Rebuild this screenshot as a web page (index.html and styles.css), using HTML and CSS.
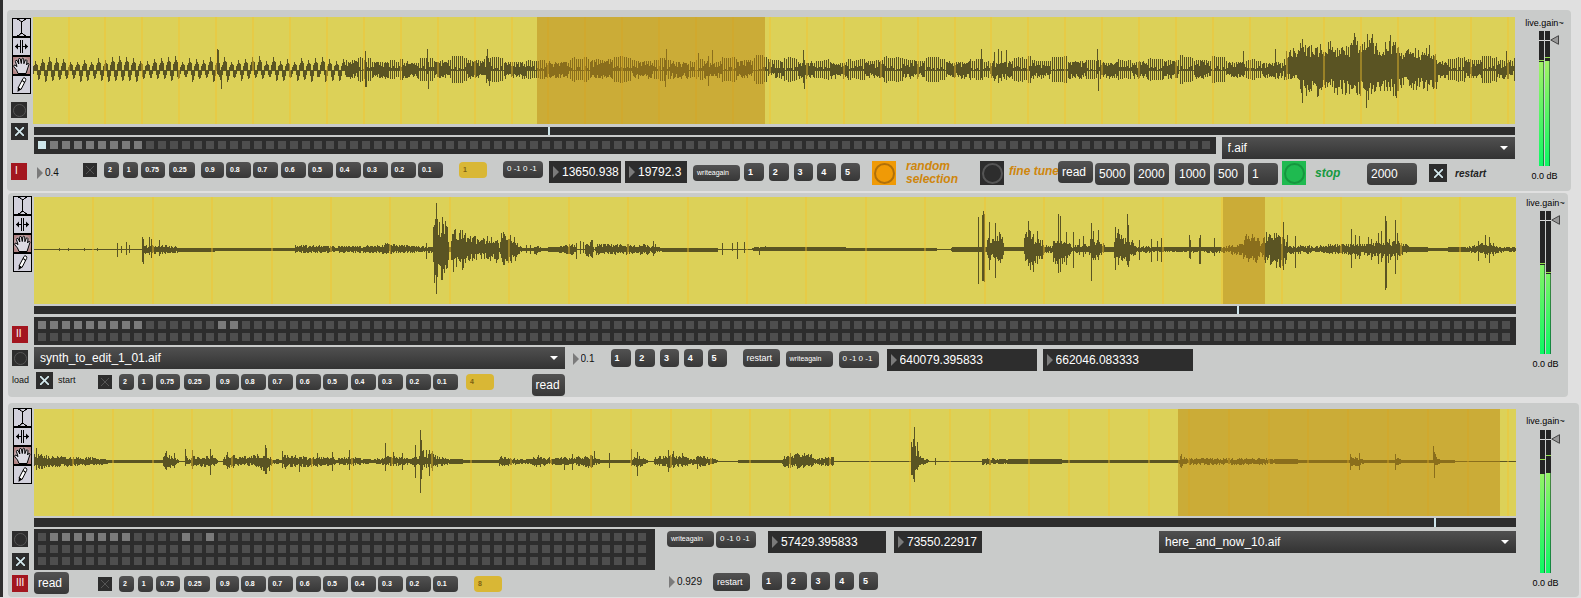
FILE: index.html
```html
<!DOCTYPE html>
<html lang="en">
<head>
<meta charset="utf-8">
<title>Sample player</title>
<link rel="stylesheet" href="styles.css">
</head>
<body>
<svg class="defs" aria-hidden="true">
  <symbol id="i-beam" viewBox="0 0 17 17"><path d="M4 .5h2.500M11 .5h2M6 1.500h1.500M10 1.500h1.500M7.500 2.500h2.500M8.500 3v11M7 14.500h3M6 15.500h1.500M10 15.500h1.500M4 16.500h2.500M11 16.500h2" stroke="#000" fill="none"/></symbol>
  <symbol id="i-split" viewBox="0 0 17 17"><path d="M7.500 2v13M9.500 2v13M2 8.500h5M10 8.500h5" stroke="#000" fill="none"/><path d="M2 8.500l3-3v6zM15 8.500l-3-3v6z"/></symbol>
  <symbol id="i-hand" viewBox="0 0 17 17"><path d="M5 16.500L3.500 13 .8 9.800Q.3 8 2 8l2 1.600L2.400 4.500Q2.500 3 4 3.300L5.800 7 5.400 2.200Q6 .6 7.300 1.800L8.300 6.500 8.800 1.800Q9.800.5 10.700 1.800L10.900 6.700 12.300 3Q13.500 2.300 14 3.700L13.600 8 14.700 6.300Q16 6 16 7.400L14.500 12 13 16.500z" fill="#dcdae2" stroke="#000"/></symbol>
  <symbol id="i-pencil" viewBox="0 0 17 17"><path d="M5 12L10 2.500Q10.800 1.300 12 2L12.700 3Q13 3.700 12.600 4.500L8 13.500z" fill="#fff" stroke="#000"/><path d="M5 11l3 2.500L4.500 16zM9.500 4l2.500 2-.6 1L9 5z"/></symbol>
  <symbol id="i-knob" viewBox="0 0 9 10"><path d="M.8 5L8.500 .7v8.600z" fill="#999" stroke="#444"/></symbol>
</svg>

<section class="panel panel-one" aria-label="Player one">
  <div class="side">
    <div class="tools">
      <button aria-label="Select"><svg><use href="#i-beam"/></svg></button>
      <button aria-label="Loop"><svg><use href="#i-split"/></svg></button>
      <button class="active" aria-label="Move"><svg><use href="#i-hand"/></svg></button>
      <button aria-label="Draw"><svg><use href="#i-pencil"/></svg></button>
    </div>
    <button class="bang" aria-label="Bang"></button>
    <input class="toggle large on" type="checkbox" checked aria-label="Play">
    <span class="mark">I</span>
  </div>
  <div class="main">
    <svg class="wave" data-wave="one" role="img" aria-label="Waveform of f.aif"></svg>
    <div class="scrub"><i style="left:34.7%"></i></div>
    <div class="row files">
      <div class="preset" data-count="98" data-on="0" data-stored="1,2,3,4,5,6,7,8"></div>
      <label class="menu"><select aria-label="File"><option>f.aif</option></select></label>
    </div>
    <div class="row controls">
      <label class="value"><i></i><input value="0.4" aria-label="Speed"></label>
      <div class="speeds">
        <input class="toggle dim" type="checkbox" aria-label="Speed lock">
        <div class="coarse"><button class="tiny">2</button><button class="tiny">1</button><button class="tiny w24">0.75</button><button class="tiny w26">0.25</button></div>
        <button class="tiny w23">0.9</button>
        <div class="fine"><button class="tiny">0.8</button><button class="tiny">0.7</button><button class="tiny">0.6</button><button class="tiny">0.5</button><button class="tiny">0.4</button><button class="tiny">0.3</button><button class="tiny">0.2</button><button class="tiny">0.1</button></div>
        <button class="tiny gold gap16">1</button>
      </div>
      <button class="msg loop gap16 up">0 -1 0 -1</button>
      <label class="number w72 gap6 up"><i></i><input value="13650.938" aria-label="Start"></label>
      <label class="number w62 gap4 up"><i></i><input value="19792.3" aria-label="End"></label>
      <button class="msg write gap6">writeagain</button>
      <div class="digits gap4"><button class="msg w20">1</button><button class="msg w20">2</button><button class="msg">3</button><button class="msg">4</button><button class="msg">5</button></div>
      <button class="bang big orange gap12" aria-label="Random selection"></button>
      <span class="note note-random">random selection</span>
      <button class="bang big" aria-label="Fine tune"></button>
      <span class="note note-tune up">fine tune</span>
      <button class="msg wide up">read</button>
      <button class="msg wide gap2 down">5000</button>
      <button class="msg wide gap4 down">2000</button>
      <button class="msg wide gap6 down">1000</button>
      <button class="msg wide w30 gap4 down">500</button>
      <button class="msg wide w30 gap4 down">1</button>
      <button class="bang big green gap4" aria-label="Stop"></button>
      <span class="note note-stop">stop</span>
      <button class="msg wide w50 down">2000</button>
      <input class="toggle large on gap12" id="restart" type="checkbox" checked>
      <label class="note note-restart" for="restart">restart</label>
    </div>
  </div>
  <div class="gain">
    <span>live.gain~</span>
    <div class="meter"><b style="--level:77%;--peak:78%"></b><b style="--level:78%;--peak:80%"></b><svg><use href="#i-knob"/></svg></div>
    <span>0.0 dB</span>
  </div>
</section>

<section class="panel panel-two" aria-label="Player two">
  <div class="side">
    <div class="tools">
      <button aria-label="Select"><svg><use href="#i-beam"/></svg></button>
      <button aria-label="Loop"><svg><use href="#i-split"/></svg></button>
      <button class="active" aria-label="Move"><svg><use href="#i-hand"/></svg></button>
      <button aria-label="Draw"><svg><use href="#i-pencil"/></svg></button>
    </div>
    <span class="mark">II</span>
    <button class="bang" aria-label="Bang"></button>
    <span class="caption">load</span>
  </div>
  <div class="main">
    <svg class="wave" data-wave="two" role="img" aria-label="Waveform of synth_to_edit_1_01.aif"></svg>
    <div class="scrub"><i style="left:81.2%"></i></div>
    <div class="preset" data-count="246" data-stored="0,1,2,3,4,5,6,7,8,15,16"></div>
    <div class="row cues">
      <label class="menu"><select aria-label="File"><option>synth_to_edit_1_01.aif</option></select></label>
      <label class="value gap8"><i></i><input value="0.1" aria-label="Speed"></label>
      <div class="digits"><button class="msg w20">1</button><button class="msg w20">2</button><button class="msg">3</button><button class="msg">4</button><button class="msg">5</button></div>
      <button class="msg restart gap16">restart</button>
      <button class="msg write gap6">writeagain</button>
      <button class="msg loop gap6">0 -1 0 -1</button>
      <label class="number w150 gap8 down"><i></i><input value="640079.395833" aria-label="Start"></label>
      <label class="number w150 gap6 down"><i></i><input value="662046.083333" aria-label="End"></label>
    </div>
    <div class="row rates">
      <input class="toggle large on gap2" id="start" type="checkbox" checked>
      <label class="caption" for="start">start</label>
      <div class="speeds">
        <input class="toggle dim" type="checkbox" aria-label="Speed lock">
        <div class="coarse"><button class="tiny">2</button><button class="tiny">1</button><button class="tiny w24">0.75</button><button class="tiny w26">0.25</button></div>
        <button class="tiny w23">0.9</button>
        <div class="fine"><button class="tiny">0.8</button><button class="tiny">0.7</button><button class="tiny">0.6</button><button class="tiny">0.5</button><button class="tiny">0.4</button><button class="tiny">0.3</button><button class="tiny">0.2</button><button class="tiny">0.1</button></div>
        <button class="tiny gold gap8">4</button>
      </div>
      <button class="msg wide last">read</button>
    </div>
  </div>
  <div class="gain">
    <span>live.gain~</span>
    <div class="meter"><b style="--level:62%;--peak:63%"></b><b style="--level:56%;--peak:57%"></b><svg><use href="#i-knob"/></svg></div>
    <span>0.0 dB</span>
  </div>
</section>

<section class="panel panel-three" aria-label="Player three">
  <div class="side">
    <div class="tools">
      <button aria-label="Select"><svg><use href="#i-beam"/></svg></button>
      <button aria-label="Loop"><svg><use href="#i-split"/></svg></button>
      <button class="active" aria-label="Move"><svg><use href="#i-hand"/></svg></button>
      <button aria-label="Draw"><svg><use href="#i-pencil"/></svg></button>
    </div>
    <button class="bang" aria-label="Bang"></button>
    <input class="toggle large on" type="checkbox" checked aria-label="Play">
    <span class="mark">III</span>
  </div>
  <div class="main">
    <svg class="wave" data-wave="three" role="img" aria-label="Waveform of here_and_now_10.aif"></svg>
    <div class="scrub"><i style="left:94.5%"></i></div>
    <div class="split">
      <div class="left">
        <div class="preset" data-count="153" data-stored="1,2,3,4,5,6,7,12,14"></div>
        <div class="row">
          <button class="msg wide">read</button>
          <div class="speeds">
            <input class="toggle dim" type="checkbox" aria-label="Speed lock">
            <div class="coarse"><button class="tiny">2</button><button class="tiny">1</button><button class="tiny w24">0.75</button><button class="tiny w26">0.25</button></div>
            <button class="tiny w23">0.9</button>
            <div class="fine"><button class="tiny">0.8</button><button class="tiny">0.7</button><button class="tiny">0.6</button><button class="tiny">0.5</button><button class="tiny">0.4</button><button class="tiny">0.3</button><button class="tiny">0.2</button><button class="tiny">0.1</button></div>
            <button class="tiny gold gap16">8</button>
          </div>
        </div>
      </div>
      <div class="right">
        <div class="row">
          <button class="msg write up">writeagain</button>
          <button class="msg loop gap2 up">0 -1 0 -1</button>
          <label class="number w118 gap12"><i></i><input value="57429.395833" aria-label="Start"></label>
          <label class="number w88 gap8"><i></i><input value="73550.22917" aria-label="End"></label>
          <label class="menu last"><select aria-label="File"><option>here_and_now_10.aif</option></select></label>
        </div>
        <div class="row">
          <label class="value"><i></i><input value="0.929" aria-label="Speed"></label>
          <button class="msg restart">restart</button>
          <div class="digits gap12"><button class="msg w20">1</button><button class="msg w20">2</button><button class="msg">3</button><button class="msg">4</button><button class="msg">5</button></div>
        </div>
      </div>
    </div>
  </div>
  <div class="gain">
    <span>live.gain~</span>
    <div class="meter"><b style="--level:69%;--peak:79%"></b><b style="--level:70%;--peak:82%"></b><svg><use href="#i-knob"/></svg></div>
    <span>0.0 dB</span>
  </div>
</section>
<script src="waves.js"></script>
</body>
</html>
```

FILE: styles.css
```css
* { box-sizing: border-box; }

body {
  margin: 0;
  padding: 10px 0 0;
  border-left: 3px solid #2f2f2f;
  background: #e0e0e0;
  color: #111;
  font: 12px/14px "Liberation Sans", Arial, sans-serif;
}

button, input, select { font: inherit; color: inherit; margin: 0; padding: 0; border: 0; }
.defs { position: absolute; width: 0; height: 0; }

/* panels */
.panel { display: flex; background: #c9cbca; border-radius: 4px; }
.panel-one { margin: 0 10px 2px 4px; padding: 7px 0 6px; }
.panel-two { margin: 0 13px 6px 5px; padding: 4px 0 1px; }
.panel-three { margin: 0 2px 0 5px; padding: 6px 0 3px; }
.main { flex: 1; min-width: 0; display: flex; flex-direction: column; gap: 2px; }
.panel-one .gain { width: 56px; }
.panel-two .gain { width: 52px; }
.panel-three .gain { width: 63px; }

/* left column */
.side { width: 26px; flex: none; padding-left: 4px; display: flex; flex-direction: column; }
.tools { margin-left: 1px; width: 19px; }
.tools button { display: block; width: 19px; height: 19px; border: 1px solid #000; background: #d2d1dc; }
.tools button.active { background: radial-gradient(circle, #d8d4dc 40%, #b08080 80%); }
.tools svg { display: block; width: 17px; height: 17px; }
.panel-one .side { padding-top: 1px; }
.panel-one .bang:not(.big) { margin-top: 8px; }
.panel-one .side .toggle { margin-top: 5px; }
.panel-one .mark { margin-top: 23px; }
.panel-two .tools, .panel-three .tools { margin-top: -1px; }
.panel-two .mark { margin-top: 54px; }
.panel-two .side .bang { margin-top: 7px; }
.panel-two .side .caption { margin: 7px 0 0; }
.panel-three .side .bang { margin-top: 47px; }
.panel-three .side .toggle { margin-top: 6px; }
.panel-three .mark { margin-top: 5px; }
.mark { width: 16px; height: 17px; padding-left: 4px; background: #a3161f; color: #fff; font-size: 10px; line-height: 16px; }
.caption { font-size: 9px; line-height: 14px; }

/* waveform */
.wave { display: block; width: 100%; height: 107px; background: #dcd158; }
.panel-one .wave { margin-bottom: 1px; }
.scrub { position: relative; height: 8px; background: #2d2d2d; }
.scrub i { position: absolute; top: 0; bottom: 0; width: 2px; background: #cde4ea; }
.panel-one .scrub, .panel-one .files { margin-left: 1px; }
.panel-two .scrub { margin-bottom: 1px; }
.panel-three .scrub { height: 9px; }

/* preset grids */
.preset { display: grid; grid-template-columns: repeat(auto-fill, 8px); gap: 4px; align-content: start; padding: 4px 4px 5px; background: #2d2d2d; overflow: hidden; }
.preset span { height: 8px; background: #4e4e4e; }
.preset .stored { background: #7a7a7a; }
.preset .on { background: #cfe6ea; }
.panel-two .preset { padding-bottom: 4px; }

/* rows */
.row { display: flex; align-items: center; }
.row > * { flex: none; }
.files { align-items: flex-start; gap: 6px; }
.files .preset { flex: 4 1 0; }
.files .menu { flex: 1 1 0; }
.controls { height: 24px; padding-left: 4px; }
.up { align-self: flex-start; }
.down { align-self: flex-end; }
.last { margin-left: auto; }
.gap2 { margin-left: 2px; }
.gap4 { margin-left: 4px; }
.gap6 { margin-left: 6px; }
.gap8 { margin-left: 8px; }
.gap12 { margin-left: 12px; }
.gap16 { margin-left: 16px; }
.cues { height: 24px; }
.cues .menu { width: 35.8%; align-self: flex-start; }
.cues .value { width: 38px; }
.rates { width: 35.8%; height: 24px; align-items: flex-start; margin-top: -1px; }
.rates .caption { width: 45px; padding: 0 0 0 5px; margin-top: 1px; }
.rates .speeds { margin-top: 2px; }
.rates .last { margin-top: 2px; }
.split { display: flex; }
.split .left { width: 41.9%; display: flex; flex-direction: column; gap: 2px; }
.split .left .speeds { margin: 2px 0 0 29px; }
.split .right { flex: 1; display: flex; flex-direction: column; justify-content: space-between; padding: 2px 0 2px 12px; }
.right .menu { width: 357px; }

/* message buttons */
.msg, .tiny {
  background: linear-gradient(#525252, #373737);
  color: #fff;
  text-align: left;
  white-space: nowrap;
  border-radius: 4px;
}
.msg { width: 19px; height: 18px; padding: 0 0 1px 4px; font-size: 9px; line-height: 12px; font-weight: bold; }
.tiny { width: 25px; height: 16px; padding: 0 0 1px 4px; font-size: 7px; line-height: 10px; font-weight: bold; }
.coarse .tiny { width: 15px; }
.tiny.w23 { width: 23px; }
.coarse .w24 { width: 24px; }
.coarse .w26 { width: 26px; }
.tiny.gold { width: 28px; background: #d9b735; color: #7d6212; }
.w20 { width: 20px; }
.loop { width: 40px; height: 17px; font-size: 8px; font-weight: normal; }
.write { width: 47px; height: 16px; font-size: 7px; font-weight: normal; }
.restart { width: 37px; font-weight: normal; }
.wide { width: 35px; height: 22px; font-size: 12px; line-height: 14px; font-weight: normal; }
.w30 { width: 30px; }
.w50 { width: 50px; }
.rates .wide { width: 33px; }

.speeds { display: flex; align-items: center; }
.controls .speeds { align-self: flex-start; margin-top: 1px; }
.speeds .toggle { margin-right: 7px; }
.coarse { display: flex; justify-content: space-between; width: 91px; margin-right: 6px; }
.fine { display: flex; justify-content: space-between; width: 217px; margin-left: 2px; }
.digits { display: flex; justify-content: space-between; width: 116px; }
.controls .digits, .right .digits, .cues .digits, .cues .restart { margin-bottom: 2px; }

/* toggles and bangs */
.toggle {
  --c: #555;
  appearance: none;
  width: 14px;
  height: 14px;
  background:
    linear-gradient(45deg, transparent 46%, var(--c) 46%, var(--c) 54%, transparent 54%) center / 8px 8px no-repeat,
    linear-gradient(-45deg, transparent 46%, var(--c) 46%, var(--c) 54%, transparent 54%) center / 8px 8px no-repeat,
    #2d2d2d;
}
.toggle.large {
  --c: #d3e9ee;
  width: 17px;
  height: 17px;
  background:
    linear-gradient(45deg, transparent 43%, var(--c) 45%, var(--c) 55%, transparent 57%) center / 9px 9px no-repeat,
    linear-gradient(-45deg, transparent 43%, var(--c) 45%, var(--c) 55%, transparent 57%) center / 9px 9px no-repeat,
    #2d2d2d;
}
.controls .toggle.large { width: 18px; height: 18px; }
.bang { display: grid; place-items: center; width: 16px; height: 16px; background: #2d2d2d; color: #555; }
.bang::before { content: ""; width: 11px; height: 11px; border: 1px solid currentColor; border-radius: 50%; }
.bang.big { width: 24px; height: 24px; }
.bang.big::before { width: 17px; height: 17px; border-width: 2px; }
.bang.orange { background: #f09a06; color: #b0700a; }
.bang.green { background: #1fba50; color: #16963f; }

/* number boxes */
.value, .number { display: flex; align-items: center; }
.value i, .number i { flex: none; border-left: 6px solid #7b7b7b; border-top: 6px solid transparent; border-bottom: 6px solid transparent; }
.value { width: 46px; font-size: 10px; }
.value input { width: 32px; margin-left: 2px; height: 14px; background: none; }
.number { height: 22px; padding-left: 4px; background: #2d2d2d; color: #fff; }
.number input { flex: 1; min-width: 0; margin-left: 3px; height: 16px; background: none; }
.right .value { padding-left: 2px; }
.w62 { width: 62px; }
.w72 { width: 72px; }
.w88 { width: 88px; }
.w118 { width: 118px; }
.w150 { width: 150px; }

/* file menus */
.menu { position: relative; height: 22px; }
.menu select { appearance: none; display: block; width: 100%; height: 22px; padding-left: 6px; background: linear-gradient(#505050, #333); color: #fff; border-radius: 0; }
.menu::after { content: ""; position: absolute; right: 7px; top: 9px; border-top: 4px solid #fff; border-left: 4px solid transparent; border-right: 4px solid transparent; }

/* comments */
.note { font-weight: bold; font-style: italic; line-height: 13px; color: #cf860c; }
.note-random { width: 84px; padding: 0 16px 0 10px; }
.note-tune { width: 54px; padding: 4px 0 0 5px; white-space: nowrap; }
.note-stop { width: 61px; padding-left: 9px; color: #159a40; }
.note-restart { padding-left: 8px; font-size: 10px; color: #222; }

/* gain */
.gain { flex: none; padding-left: 8px; display: flex; flex-direction: column; }
.gain span { width: 43px; font-size: 9px; line-height: 12px; text-align: center; color: #000; }
.panel-one .meter { height: 135px; }
.panel-two .meter, .panel-three .meter { height: 143px; }
.meter { position: relative; display: flex; gap: 1px; width: 11px; margin: 2px 0 4px 16px; }
.panel-three .meter { margin-top: 3px; }
.panel-three .gain { padding-top: 6px; }
.meter b {
  position: relative;
  width: 5px;
  background:
    linear-gradient(to top, transparent var(--level), #242424 var(--level)),
    linear-gradient(90deg, transparent 4px, rgba(20, 60, 40, .6) 4px),
    linear-gradient(to top, #0cf864, #d0f068);
}
.meter b::before { content: ""; position: absolute; left: 0; right: 0; bottom: var(--peak); height: 1px; background: #93e04e; }
.meter b::after { content: ""; position: absolute; left: 0; right: 0; top: 9px; height: 1px; background: #ddd; }
.meter svg { position: absolute; left: 11px; top: 4px; width: 9px; height: 10px; }
```

FILE: waves.js
```js
// Each sample is "x up down" in pixels of a 1482 x 107 view; env is interpolated, spikes stand alone.
const waves = {
  one: {
    mid: 53, grid: [34.5, 36.92], select: [504, 732], origin: 33,
    env: '',
    loud: '1285 10 8,1287 18 9,1292 26 9,1299 28 11,1301 32 32,1310 28 22,1317 28 28,1325 29 22,1331 31 14,1335 24 27,1347 25 32,1354 37 25,1360 29 26,1366 36 37,1372 36 22,1378 25 32,1390 35 25,1395 30 30,1402 22 20,1410 27 22,1420 20 18,1430 27 25,1435 18 25,1438 10 8',
    spikes: '217 21 3,218 20 4,221 3 18,365 19 16,366 8 16,427 21 3,428 8 18,487 21 8,489 8 15,665 10 16,666 21 4,698 17 6,708 14 15,712 20 5,803 20 12,804 10 18,981 21 7,994 18 10,998 21 12,1001 19 10,1006 20 9,1097 21 3,1098 10 20,1243 19 6,1275 21 8,1286 19 9,1302 31 32,1354 37 14,1366 22 37,1367 36 20,1372 36 18,1390 35 20,1506 19 4'
  },
  two: {
    mid: 52, grid: [58.3, 59.42], select: [1189, 1231], origin: 34,
    env: '34 0 0,141 0 0,142 6 6,148 3 3,153 4 4,178 3 3,179 1 2,250 1 1,294 1 1,295 4 3,350 3 3,380 4 3,385 6 4,400 4 3,425 3 3,432 2 3,433 24 22,436 30 28,446 29 27,447 20 18,448 2 2,450 2 2,451 18 15,455 20 19,464 19 19,466 13 11,480 11 9,488 12 10,498 11 10,499 1 2,501 15 15,507 13 12,515 12 12,518 6 5,522 1 1,533 1 1,535 6 6,541 1 1,555 2 2,565 4 3,570 6 6,576 5 5,577 0 0,584 0 0,586 7 7,592 8 7,594 0 0,597 7 7,602 5 4,648 5 5,650 1 1,653 6 5,660 1 1,664 1 2,717 1 2,718 0 0,750 0 0,755 2 1,935 1 1,937 0 0,950 0 0,952 2 2,986 2 2,988 15 11,993 9 8,996 18 17,1002 13 11,1004 2 1,1023 2 1,1025 20 17,1031 18 19,1036 11 13,1042 8 8,1044 4 3,1052 3 3,1053 13 13,1062 13 15,1069 7 7,1071 3 2,1084 5 5,1088 3 2,1091 13 11,1098 8 8,1103 6 5,1106 2 2,1113 2 2,1114 17 16,1122 14 12,1133 8 9,1136 3 3,1150 3 3,1153 2 2,1221 2 3,1230 4 4,1242 6 5,1244 15 12,1257 17 16,1260 4 3,1264 16 13,1278 17 18,1284 12 16,1288 3 4,1310 4 4,1312 2 1,1318 4 2,1330 5 4,1350 5 5,1370 6 6,1382 9 8,1387 12 15,1391 9 7,1400 8 6,1406 6 3,1409 2 2,1425 2 2,1430 1 1,1465 2 2,1475 4 3,1482 6 5,1492 7 6,1496 3 3,1516 2 2',
    spikes: '59 1 1,68 1 1,84 1 1,97 1 1,117 6 7,121 3 3,126 7 5,129 4 3,142 12 12,143 10 14,149 12 5,151 10 8,159 9 6,426 6 9,434 24 33,435 30 25,436 46 44,447 22 18,448 7 10,453 15 22,487 13 9,496 8 13,503 17 15,526 4 3,530 4 4,580 8 4,583 7 3,576 6 9,592 9 8,653 8 6,722 6 5,732 6 1,737 7 9,744 7 3,759 1 5,765 3 1,978 32 34,982 34 31,983 38 31,984 35 32,989 27 20,995 26 28,999 17 10,1028 28 16,1033 15 22,1037 18 14,1058 35 23,1060 33 22,1066 17 15,1073 17 18,1079 10 5,1083 13 7,1091 26 31,1093 18 10,1098 19 10,1115 22 20,1118 20 15,1127 35 15,1128 24 17,1139 9 10,1151 10 12,1157 8 11,1161 11 12,1189 14 8,1190 9 9,1199 11 14,1200 14 14,1214 11 6,1283 27 20,1287 14 3,1295 13 18,1351 20 18,1355 14 9,1359 13 9,1368 12 5,1371 10 10,1378 16 14,1381 18 12,1385 33 40,1386 28 38,1395 29 24,1397 16 10,1478 8 11,1485 14 8,1489 12 13'
  },
  three: {
    mid: 52, grid: [37.8, 39.86], select: [1144, 1466], origin: 34,
    env: '34 8 6,37 8 7,50 5 5,70 4 5,90 4 3,100 2 3,110 1 1,162 1 1,163 8 7,172 5 5,176 3 2,179 0 0,184 0 0,186 5 3,190 1 1,192 8 7,196 4 4,203 5 5,213 6 5,218 0 0,222 0 0,223 6 6,232 6 6,240 4 4,255 7 4,263 9 9,268 7 13,272 3 3,280 1 1,284 7 7,290 6 5,305 4 5,330 4 4,340 3 3,350 4 4,365 3 2,372 1 1,385 5 3,393 5 4,410 2 2,415 5 5,418 3 3,421 14 14,425 7 5,432 8 7,440 4 4,450 2 2,475 1 1,498 1 1,499 5 5,510 3 3,530 2 2,538 6 5,550 3 3,573 4 3,590 6 6,600 1 1,630 1 1,636 7 8,645 2 2,648 0 0,653 0 0,655 4 4,672 6 6,685 5 5,690 2 2,700 5 5,712 3 2,718 0 0,735 0 0,740 1 1,781 1 1,783 5 5,797 8 7,812 6 5,816 1 1,821 4 4,833 4 4,834 0 0,910 0 0,911 17 13,918 12 8,922 4 4,928 1 0,929 0 0,981 0 0,982 3 3,1010 2 2,1054 2 2,1068 1 1,1178 1 1,1180 5 5,1187 3 3,1200 3 3,1255 3 3,1262 3 3,1275 2 2,1320 1 1,1349 1 1,1351 4 5,1358 3 4,1364 1 1,1394 1 1,1395 5 6,1401 1 1,1432 1 1,1434 8 5,1440 1 1,1468 0 0,1516 0 0',
    spikes: '36 13 8,166 10 8,174 8 6,185 12 4,192 11 7,210 12 13,227 9 7,265 16 12,266 13 12,282 10 6,299 4 10,317 8 5,332 9 9,349 11 8,385 18 9,393 9 4,402 8 8,415 16 16,420 31 31,421 21 17,426 11 6,429 11 14,432 10 9,564 4 8,572 7 8,594 10 3,609 8 6,631 12 4,637 9 14,668 11 10,673 10 6,682 8 5,697 5 7,790 8 6,911 19 13,913 22 17,914 34 20,917 19 8,935 3 3,1181 7 6,1350 7 8,1359 8 8,1395 7 8,1433 15 1,1434 9 16'
  }
};

const parse = (s) => s ? s.split(',').map((p) => p.split(' ').map(Number)) : [];
const noise = (n) => { const v = Math.sin(n * 127.1 + 3.7) * 43758.5453; return v - Math.floor(v); };

function at(env, x) {
  for (let i = 1; i < env.length; i++) {
    const a = env[i - 1], b = env[i];
    if (x >= a[0] && x <= b[0]) {
      const t = (x - a[0]) / (b[0] - a[0]);
      return [a[1] + (b[1] - a[1]) * t, a[2] + (b[2] - a[2]) * t];
    }
  }
  return null;
}

// Slow saw pulses that turn into a fast tone with a moving beat.
function tone(x) {
  if (x < 345) {
    const p = (x - 31) % 7, k = Math.floor((x - 31) / 7), peak = 8 + noise(k) * 6, low = 7 + noise(k + 50) * 6;
    const up = [0, 0, .4, .6, 1, .7, .6][p] * peak;
    const down = [.9, .8, .4, 0, 0, 0, .5][p] * low;
    return [up, down];
  }
  const beat = Math.pow(Math.sin(x / 11.5 + Math.sin(x / 61)), 2);
  const height = 9 + 2 * Math.sin(x / 23) + noise(Math.floor(x / 4)) * 3;
  const on = x % 2 === 0;
  if (beat > .45) {
    return [on ? height * .8 : 2 + noise(x) * 7, on ? 2 + noise(x + 5) * 6 : 3 + noise(x + 9) * 5];
  }
  return [on ? height + 1 : noise(x) * 4, on ? height - 1 : 0];
}

function samples(name, w) {
  const env = parse(w.env), loud = parse(w.loud), out = [];
  for (let x = w.origin; x < w.origin + 1482; x++) {
    let v;
    if (name === 'one') {
      v = at(loud, x);
      if (v) v = [v[0] * (.45 + noise(x) * .5), v[1] * (.3 + noise(x + 400) * .65)];
      else v = tone(x);
    } else {
      v = at(env, x) || [0, 0];
      v = v.map((h, i) => h > 2 ? h * (.35 + noise(x + i * 300) * .75) : h);
    }
    out.push(v);
  }
  parse(w.spikes).forEach(([x, u, d]) => { out[x - w.origin] = [u, d]; });
  return out;
}

document.querySelectorAll('.wave').forEach((svg) => {
  const name = svg.dataset.wave, w = waves[name];
  let d = '';
  samples(name, w).forEach(([u, l], x) => {
    const top = Math.round(u), low = Math.round(l);
    d += `M${x} ${w.mid - top}h1v${top + low + 1}h-1z`;
  });
  let lines = '';
  for (let x = w.grid[0]; x < 1482; x += w.grid[1]) lines += `M${Math.round(x)} 0h2v107h-2z`;
  svg.setAttribute('viewBox', '0 0 1482 107');
  svg.setAttribute('preserveAspectRatio', 'none');
  svg.setAttribute('shape-rendering', 'crispEdges');
  svg.innerHTML = `<path d="${d}" fill="#5a5423"/><path d="${lines}" fill="#f2c32d" fill-opacity=".42"/>` +
    `<rect x="${w.select[0]}" width="${w.select[1] - w.select[0]}" height="107" fill="#ba8716" fill-opacity=".5"/>`;
});

document.querySelectorAll('.preset').forEach((grid) => {
  const stored = (grid.dataset.stored || '').split(','), on = grid.dataset.on;
  for (let i = 0; i < Number(grid.dataset.count); i++) {
    const cell = document.createElement('span');
    if (String(i) === on) cell.className = 'on';
    else if (stored.includes(String(i))) cell.className = 'stored';
    grid.append(cell);
  }
});
```
